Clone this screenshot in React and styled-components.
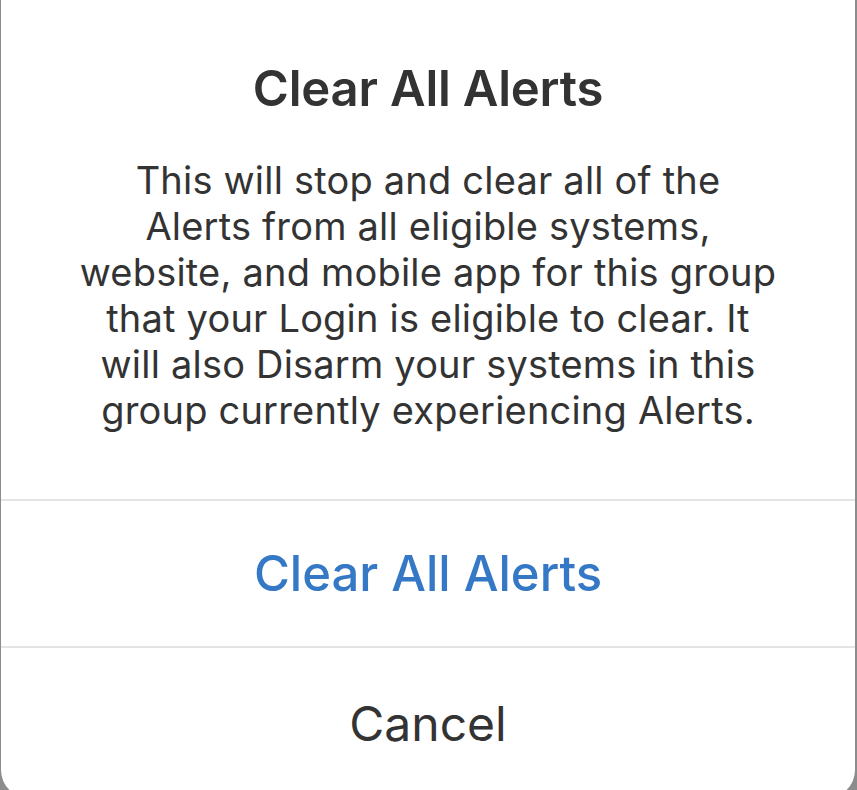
import styled, { createGlobalStyle } from "styled-components";

const GlobalStyle = createGlobalStyle`
  html, body {
    margin: 0;
    padding: 0;
    background: #8c8c8c;
    overflow: hidden;
  }
  body {
    font-family: Inter, "Noto Sans", "Liberation Sans", sans-serif;
  }
`;

const Screen = styled.div`
  width: 857px;
  height: 790px;
  overflow: hidden;
  padding: 0 2px 0 1px;
  box-sizing: border-box;
`;

const Sheet = styled.div`
  margin-top: -30px;
  background: #ffffff;
  border-radius: 28px;
  overflow: hidden;
`;

const Header = styled.div`
  padding: 91px 10px 66px;
  text-align: center;
  color: #333333;
`;

const Title = styled.h1`
  margin: 0;
  font-size: 49px;
  line-height: 56px;
  font-weight: 600;
  letter-spacing: -0.2px;
`;

const Message = styled.p`
  margin: 40px 0 0;
  font-size: 38px;
  line-height: 46px;
  font-weight: 400;
  letter-spacing: 0.2px;
`;

const Action = styled.button`
  display: flex;
  align-items: center;
  justify-content: center;
  width: 100%;
  height: ${(p) => p.$h}px;
  border: 0;
  border-top: 2px solid #e3e3e3;
  background: transparent;
  font-family: inherit;
  font-size: ${(p) => (p.$primary ? 49 : 48)}px;
  font-weight: ${(p) => (p.$primary ? 500 : 400)};
  color: ${(p) => (p.$primary ? "#3478c6" : "#333333")};
  padding: 0;
  cursor: pointer;
`;

export default function App() {
  return (
    <>
      <GlobalStyle />
      <Screen>
        <Sheet>
          <Header>
            <Title>Clear All Alerts</Title>
            <Message>
              This will stop and clear all of the
              <br />
              Alerts from all eligible systems,
              <br />
              website, and mobile app for this group
              <br />
              that your Login is eligible to clear. It
              <br />
              will also Disarm your systems in this
              <br />
              group currently experiencing Alerts.
            </Message>
          </Header>
          <Action $primary $h={147}>Clear All Alerts</Action>
          <Action $h={152}>Cancel</Action>
        </Sheet>
      </Screen>
    </>
  );
}
